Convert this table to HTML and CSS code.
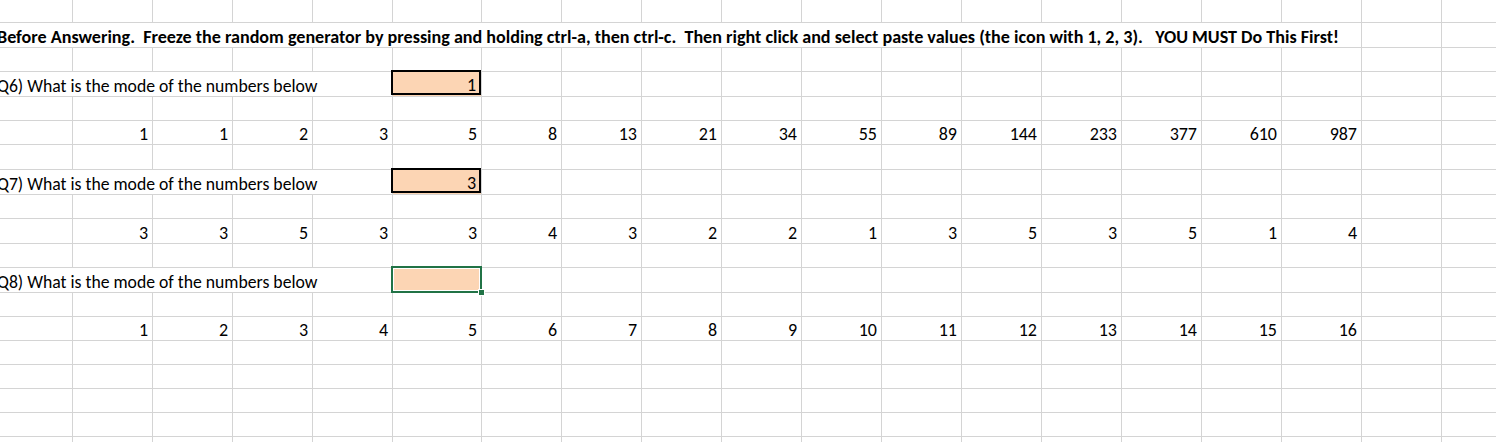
FILE: index.html
```html
<!DOCTYPE html>
<html>
<head>
<meta charset="utf-8">
<link rel="stylesheet" href="styles.css">
</head>
<body>
<div class="sheet">
  <!-- row 0 -->
  <div class="c"></div><div class="c"></div><div class="c"></div><div class="c"></div><div class="c"></div><div class="c"></div><div class="c"></div><div class="c"></div><div class="c"></div><div class="c"></div><div class="c"></div><div class="c"></div><div class="c"></div><div class="c"></div><div class="c"></div><div class="c"></div><div class="c"></div><div class="c"></div><div class="c last"></div>
  <!-- row 1 title -->
  <div class="c txt span-title"><span class="lbl bold">Before Answering.  Freeze the random generator by pressing and holding ctrl-a, then ctrl-c.  Then right click and select paste values (the icon with 1, 2, 3).   YOU MUST Do This First!</span></div><div class="c"></div><div class="c last"></div>
  <!-- row 2 -->
  <div class="c"></div><div class="c"></div><div class="c"></div><div class="c"></div><div class="c"></div><div class="c"></div><div class="c"></div><div class="c"></div><div class="c"></div><div class="c"></div><div class="c"></div><div class="c"></div><div class="c"></div><div class="c"></div><div class="c"></div><div class="c"></div><div class="c"></div><div class="c"></div><div class="c last"></div>
  <!-- row 3 Q6 -->
  <div class="c txt span-q"><span class="lbl">Q6) What is the mode of the numbers below</span></div><div class="c ans"><div class="frame"></div><span>1</span></div><div class="c"></div><div class="c"></div><div class="c"></div><div class="c"></div><div class="c"></div><div class="c"></div><div class="c"></div><div class="c"></div><div class="c"></div><div class="c"></div><div class="c"></div><div class="c"></div><div class="c last"></div>
  <!-- row 4 -->
  <div class="c"></div><div class="c"></div><div class="c"></div><div class="c"></div><div class="c"></div><div class="c"></div><div class="c"></div><div class="c"></div><div class="c"></div><div class="c"></div><div class="c"></div><div class="c"></div><div class="c"></div><div class="c"></div><div class="c"></div><div class="c"></div><div class="c"></div><div class="c"></div><div class="c last"></div>
  <!-- row 5 numbers -->
  <div class="c"></div><div class="c"><span>1</span></div><div class="c"><span>1</span></div><div class="c"><span>2</span></div><div class="c"><span>3</span></div><div class="c"><span>5</span></div><div class="c"><span>8</span></div><div class="c"><span>13</span></div><div class="c"><span>21</span></div><div class="c"><span>34</span></div><div class="c"><span>55</span></div><div class="c"><span>89</span></div><div class="c"><span>144</span></div><div class="c"><span>233</span></div><div class="c"><span>377</span></div><div class="c"><span>610</span></div><div class="c"><span>987</span></div><div class="c"></div><div class="c last"></div>
  <!-- row 6 -->
  <div class="c"></div><div class="c"></div><div class="c"></div><div class="c"></div><div class="c"></div><div class="c"></div><div class="c"></div><div class="c"></div><div class="c"></div><div class="c"></div><div class="c"></div><div class="c"></div><div class="c"></div><div class="c"></div><div class="c"></div><div class="c"></div><div class="c"></div><div class="c"></div><div class="c last"></div>
  <!-- row 7 Q7 -->
  <div class="c txt span-q"><span class="lbl">Q7) What is the mode of the numbers below</span></div><div class="c ans"><div class="frame"></div><span>3</span></div><div class="c"></div><div class="c"></div><div class="c"></div><div class="c"></div><div class="c"></div><div class="c"></div><div class="c"></div><div class="c"></div><div class="c"></div><div class="c"></div><div class="c"></div><div class="c"></div><div class="c last"></div>
  <!-- row 8 -->
  <div class="c"></div><div class="c"></div><div class="c"></div><div class="c"></div><div class="c"></div><div class="c"></div><div class="c"></div><div class="c"></div><div class="c"></div><div class="c"></div><div class="c"></div><div class="c"></div><div class="c"></div><div class="c"></div><div class="c"></div><div class="c"></div><div class="c"></div><div class="c"></div><div class="c last"></div>
  <!-- row 9 numbers -->
  <div class="c"></div><div class="c"><span>3</span></div><div class="c"><span>3</span></div><div class="c"><span>5</span></div><div class="c"><span>3</span></div><div class="c"><span>3</span></div><div class="c"><span>4</span></div><div class="c"><span>3</span></div><div class="c"><span>2</span></div><div class="c"><span>2</span></div><div class="c"><span>1</span></div><div class="c"><span>3</span></div><div class="c"><span>5</span></div><div class="c"><span>3</span></div><div class="c"><span>5</span></div><div class="c"><span>1</span></div><div class="c"><span>4</span></div><div class="c"></div><div class="c last"></div>
  <!-- row 10 -->
  <div class="c"></div><div class="c"></div><div class="c"></div><div class="c"></div><div class="c"></div><div class="c"></div><div class="c"></div><div class="c"></div><div class="c"></div><div class="c"></div><div class="c"></div><div class="c"></div><div class="c"></div><div class="c"></div><div class="c"></div><div class="c"></div><div class="c"></div><div class="c"></div><div class="c last"></div>
  <!-- row 11 Q8 -->
  <div class="c txt span-q"><span class="lbl">Q8) What is the mode of the numbers below</span></div><div class="c ans"><div class="select"><div class="handle"></div></div></div><div class="c"></div><div class="c"></div><div class="c"></div><div class="c"></div><div class="c"></div><div class="c"></div><div class="c"></div><div class="c"></div><div class="c"></div><div class="c"></div><div class="c"></div><div class="c"></div><div class="c last"></div>
  <!-- row 12 -->
  <div class="c"></div><div class="c"></div><div class="c"></div><div class="c"></div><div class="c"></div><div class="c"></div><div class="c"></div><div class="c"></div><div class="c"></div><div class="c"></div><div class="c"></div><div class="c"></div><div class="c"></div><div class="c"></div><div class="c"></div><div class="c"></div><div class="c"></div><div class="c"></div><div class="c last"></div>
  <!-- row 13 numbers -->
  <div class="c"></div><div class="c"><span>1</span></div><div class="c"><span>2</span></div><div class="c"><span>3</span></div><div class="c"><span>4</span></div><div class="c"><span>5</span></div><div class="c"><span>6</span></div><div class="c"><span>7</span></div><div class="c"><span>8</span></div><div class="c"><span>9</span></div><div class="c"><span>10</span></div><div class="c"><span>11</span></div><div class="c"><span>12</span></div><div class="c"><span>13</span></div><div class="c"><span>14</span></div><div class="c"><span>15</span></div><div class="c"><span>16</span></div><div class="c"></div><div class="c last"></div>
  <!-- rows 14-18 -->
  <div class="c"></div><div class="c"></div><div class="c"></div><div class="c"></div><div class="c"></div><div class="c"></div><div class="c"></div><div class="c"></div><div class="c"></div><div class="c"></div><div class="c"></div><div class="c"></div><div class="c"></div><div class="c"></div><div class="c"></div><div class="c"></div><div class="c"></div><div class="c"></div><div class="c last"></div>
  <div class="c"></div><div class="c"></div><div class="c"></div><div class="c"></div><div class="c"></div><div class="c"></div><div class="c"></div><div class="c"></div><div class="c"></div><div class="c"></div><div class="c"></div><div class="c"></div><div class="c"></div><div class="c"></div><div class="c"></div><div class="c"></div><div class="c"></div><div class="c"></div><div class="c last"></div>
  <div class="c"></div><div class="c"></div><div class="c"></div><div class="c"></div><div class="c"></div><div class="c"></div><div class="c"></div><div class="c"></div><div class="c"></div><div class="c"></div><div class="c"></div><div class="c"></div><div class="c"></div><div class="c"></div><div class="c"></div><div class="c"></div><div class="c"></div><div class="c"></div><div class="c last"></div>
  <div class="c"></div><div class="c"></div><div class="c"></div><div class="c"></div><div class="c"></div><div class="c"></div><div class="c"></div><div class="c"></div><div class="c"></div><div class="c"></div><div class="c"></div><div class="c"></div><div class="c"></div><div class="c"></div><div class="c"></div><div class="c"></div><div class="c"></div><div class="c"></div><div class="c last"></div>
  <div class="c"></div><div class="c"></div><div class="c"></div><div class="c"></div><div class="c"></div><div class="c"></div><div class="c"></div><div class="c"></div><div class="c"></div><div class="c"></div><div class="c"></div><div class="c"></div><div class="c"></div><div class="c"></div><div class="c"></div><div class="c"></div><div class="c"></div><div class="c"></div><div class="c last"></div>
</div>
</body>
</html>
```
FILE: styles.css
```css
html, body {
  margin: 0;
  padding: 0;
  background: #ffffff;
  overflow: hidden;
}

.sheet {
  display: grid;
  width: 1496px;
  grid-template-columns: 73px repeat(4, 80px) 89px repeat(12, 80px) 1fr;
  grid-template-rows: 23px 25px 24px 25px 24px 24px 25px 25px 24px 25px 24px 25px 24px 24px 24px 24px 24px 24px 24px;
  font-family: Carlito, Calibri, Lato, "Liberation Sans", sans-serif;
  font-size: 18px;
  color: #000000;
}

.c {
  box-sizing: border-box;
  border-right: 1px solid #d4d4d4;
  border-bottom: 1px solid #d4d4d4;
  display: flex;
  align-items: flex-end;
  justify-content: flex-end;
  padding: 0 4px 1px 0;
  white-space: pre;
  min-width: 0;
}

.c span {
  line-height: 18px;
}

.c.last {
  border-right: none;
}

.txt {
  justify-content: flex-start;
  padding-left: 0;
  overflow: visible;
}

.lbl {
  margin-left: -3px;
  font-size: 17.7px;
}

.bold {
  font-weight: bold;
  font-size: 18.1px;
}

.span-title {
  grid-column: span 17;
}

.span-q {
  grid-column: span 5;
}

.ans {
  position: relative;
  background: #fcd5b4;
}

.frame {
  position: absolute;
  top: -2px;
  left: -2px;
  right: 0;
  bottom: 1px;
  border: 2px solid #000000;
  pointer-events: none;
}

.ans span {
  position: relative;
  margin-right: 1px;
  margin-bottom: 1px;
}

.select {
  position: absolute;
  top: -2px;
  left: -2px;
  right: -1px;
  bottom: -1px;
  border: 2px solid #217346;
  box-shadow: inset 0 0 0 1px #ffffff;
}

.handle {
  position: absolute;
  right: -5px;
  bottom: -5px;
  width: 5px;
  height: 5px;
  background: #217346;
  border: 1px solid #ffffff;
}
```
